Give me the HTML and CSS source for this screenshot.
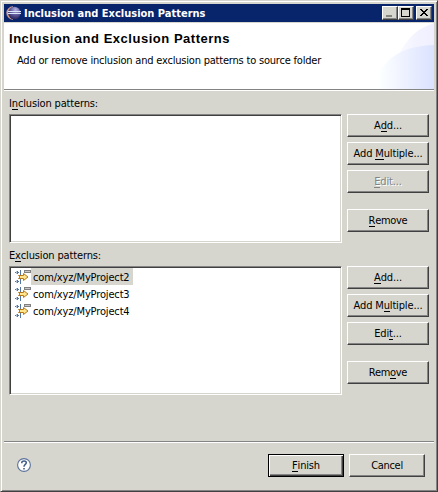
FILE: index.html
```html
<!DOCTYPE html>
<html lang="en">
<head>
<meta charset="utf-8">
<title>Inclusion and Exclusion Patterns</title>
<link rel="stylesheet" href="styles.css">
</head>
<body>
<svg width="0" height="0" class="defs" aria-hidden="true">
  <symbol id="filter" viewBox="0 0 16 16">
    <g shape-rendering="crispEdges">
      <path d="M9 2h7v3h-7z" fill="#808080"/><path d="M10 3h5v1h-5z" fill="#c8c8c8"/>
      <path d="M0 4h4v1h-4zM2 3h1v3h-1zM5 2h1v5h-1zM0 13h4v1h-4zM2 12h1v3h-1zM5 11h1v5h-1z" fill="#55779d"/>
      <path d="M1 3h1v3h-1zM1 12h1v3h-1z" fill="#b6c6d8"/>
    </g>
    <path d="M3.5 7.5h5v-2l4.5 3.5-4.5 3.5v-2h-5l1.5-1.5z" fill="#ffe68c" stroke="#b8791c"/>
  </symbol>
</svg>
<div class="window">
  <div class="titlebar">
    <svg class="logo" width="16" height="16" viewBox="0 0 16 16">
      <defs><radialGradient id="orb" cx=".6" cy=".25" r=".75"><stop offset="0" stop-color="#b9b6e0"/><stop offset=".5" stop-color="#6660a3"/><stop offset="1" stop-color="#292558"/></radialGradient></defs>
      <path d="M7 1.6A6 6 0 0 0 7 14.4C2 13 2 3 7 1.6" fill="#e6a57e" stroke="#c9a3a8" stroke-width=".5"/>
      <circle cx="8.3" cy="8" r="6.3" fill="url(#orb)"/>
      <path d="M2 6.5h13M2 8.5h13" stroke="#dbe6fa"/>
    </svg>
    <span class="caption">Inclusion and Exclusion Patterns</span>
    <div class="controls">
      <span class="ctl"><svg width="12" height="10" shape-rendering="crispEdges"><path d="M2 7h6v2h-6z" fill="#85857f"/></svg></span>
      <span class="ctl"><svg width="12" height="10" shape-rendering="crispEdges"><path d="M1 0h9v9h-9zM2 2v6h7v-6z" fill-rule="evenodd"/></svg></span>
      <span class="ctl close"><svg width="12" height="10" shape-rendering="crispEdges"><path d="M2 1h2v1h1v1h2v-1h1v-1h2v1h-1v1h-1v1h-1v1h1v1h1v1h1v1h-2v-1h-1v-1h-2v1h-1v1h-2v-1h1v-1h1v-1h1v-1h-1v-1h-1v-1h-1z"/></svg></span>
    </div>
  </div>
  <header class="banner">
    <svg class="swoosh" width="54" height="66" viewBox="0 0 54 66">
      <defs>
        <linearGradient id="g1"><stop offset="0" stop-color="#fafbff"/><stop offset=".5" stop-color="#f3f3ff"/><stop offset="1" stop-color="#efefff"/></linearGradient>
        <linearGradient id="g2"><stop offset="0" stop-color="#fbffff"/><stop offset=".3" stop-color="#f3f6ff"/><stop offset=".6" stop-color="#e8edff"/><stop offset="1" stop-color="#dbe2ff"/></linearGradient>
      </defs>
      <path d="M18 32C27 20 29 9 54 0v40z" fill="url(#g1)"/>
      <path d="M0 66V48C10 32 26 23 54 22v44z" fill="url(#g2)"/>
    </svg>
    <h1>Inclusion and Exclusion Patterns</h1>
    <p>Add or remove inclusion and exclusion patterns to source folder</p>
  </header>
  <main>
    <section>
      <label class="inc">I<u>n</u>clusion patterns:</label>
      <div class="row">
        <div class="list"></div>
        <div class="actions">
          <button class="add"><span>A<u>d</u>d...</span></button>
          <button class="multi"><span>Add <u>M</u>ultiple...</span></button>
          <button class="edit" disabled><span><u>E</u>dit...</span></button>
          <button class="remove"><span><u>R</u>emove</span></button>
        </div>
      </div>
    </section>
    <section>
      <label class="exc">E<u>x</u>clusion patterns:</label>
      <div class="row">
        <div class="list">
          <div class="item selected"><svg width="16" height="16"><use href="#filter"/></svg><span>com/xyz/MyProject2</span></div>
          <div class="item"><svg width="16" height="16"><use href="#filter"/></svg><span>com/xyz/MyProject3</span></div>
          <div class="item"><svg width="16" height="16"><use href="#filter"/></svg><span>com/xyz/MyProject4</span></div>
        </div>
        <div class="actions">
          <button class="add"><span><u>A</u>dd...</span></button>
          <button class="multi"><span>Add M<u>u</u>ltiple...</span></button>
          <button class="edit"><span>Edi<u>t</u>...</span></button>
          <button class="remove"><span>Rem<u>o</u>ve</span></button>
        </div>
      </div>
    </section>
  </main>
  <footer>
    <svg class="help" width="14" height="14" viewBox="0 0 14 14"><circle cx="7" cy="7" r="6.4" fill="#fff" stroke="#5b7299" stroke-width="1.1"/><path d="M4.8 5.3V4.7C4.8 2.4 9.3 2.4 9.3 4.8 9.3 6.4 7 6.4 7 8.7M7 10v1.6" fill="none" stroke="#455f8b" stroke-width="1.6"/></svg>
    <button class="finish"><span><u>F</u>inish</span></button>
    <button class="cancel"><span>Cancel</span></button>
  </footer>
</div>
</body>
</html>
```
FILE: styles.css
```css
* { box-sizing: border-box; }
body {
  margin: 0;
  font: 11px/13px "DejaVu Sans Condensed", "DejaVu Sans", sans-serif;
  letter-spacing: -0.15px;
  color: #000;
  background: #d6d6ce;
}
.defs { position: absolute; }
.window {
  width: 438px;
  height: 492px;
  padding: 3px;
  border: 1px solid;
  border-color: #d6d6ce #404040 #404040 #d6d6ce;
  box-shadow: inset 1px 1px #fff, inset -1px -1px #848484;
  background: #d6d6ce;
  display: flex;
  flex-direction: column;
  overflow: hidden;
  white-space: nowrap;
}
.titlebar {
  flex: none;
  width: 430px;
  height: 18px;
  display: flex;
  align-items: center;
  padding: 0 2px;
  background: #08246b;
  color: #fff;
}
.caption {
  margin-left: 2px;
  font-weight: bold;
  letter-spacing: 0;
}
.controls { display: flex; margin-left: auto; }
.ctl {
  width: 16px;
  height: 14px;
  padding: 1px;
  border: 1px solid;
  border-color: #fff #404040 #404040 #fff;
  box-shadow: inset -1px -1px #848484;
  background: #d6d6ce;
}
.ctl svg { display: block; }
.ctl.close { margin-left: 2px; }
.banner {
  flex: none;
  position: relative;
  width: 430px;
  height: 68px;
  margin-top: 1px;
  padding: 8px 5px 0;
  background: #fff;
  border-bottom: 1px solid #fff;
  box-shadow: inset 0 -1px #848484;
}
.swoosh { position: absolute; right: 0; top: 0; }
h1 {
  position: relative;
  margin: 0;
  font: bold 13px/16px "Liberation Sans", Arial, sans-serif;
  letter-spacing: 0.52px;
}
p { position: relative; margin: 7px 0 0 8px; letter-spacing: -0.2px; }
main { flex: none; padding: 6px 5px 0; }
section { height: 152px; }
label { display: block; height: 17px; }
.row { display: flex; gap: 5px; }
u { text-decoration: none; border-bottom: 1px solid; display: inline-block; line-height: 11px; }
.list {
  width: 333px;
  height: 129px;
  padding: 1px 4px;
  border: 1px solid;
  border-color: #848484 #fff #fff #848484;
  box-shadow: inset 1px 1px #404040, inset -1px -1px #d6d6ce;
  background: #fff;
}
.item { display: flex; height: 17px; margin-left: 1px; }
.item span { height: 17px; width: 102px; padding: 3px 2px 1px; }
.selected span { background: #d6d6ce; }
.actions { display: grid; grid-template-rows: 23px 23px 23px 23px; row-gap: 5px; width: 82px; }
.actions .remove { margin-top: 11px; margin-bottom: -11px; }
button {
  font: inherit;
  letter-spacing: -0.15px;
  color: #000;
  padding: 0;
  width: 82px;
  height: 23px;
  border: 1px solid;
  border-color: #fff #404040 #404040 #fff;
  border-radius: 0;
  box-shadow: inset -1px -1px #848484;
  background: #d6d6ce;
}
.remove, .cancel { letter-spacing: -0.3px; }
button:disabled { color: #848484; text-shadow: 1px 1px #fff; }
footer {
  margin-top: 40px;
  flex: 1;
  display: flex;
  padding: 12px 9px 0 13px;
  border-top: 1px solid #848484;
  box-shadow: inset 0 1px #fff;
}
.help { margin-top: 4px; flex: none; }
footer button { width: 76px; }
.finish {
  margin-left: auto;
  margin-right: 5px;
  border-color: #000;
  box-shadow: inset 1px 1px #fff, inset -1px -1px #404040, inset -2px -2px #848484;
}
```
